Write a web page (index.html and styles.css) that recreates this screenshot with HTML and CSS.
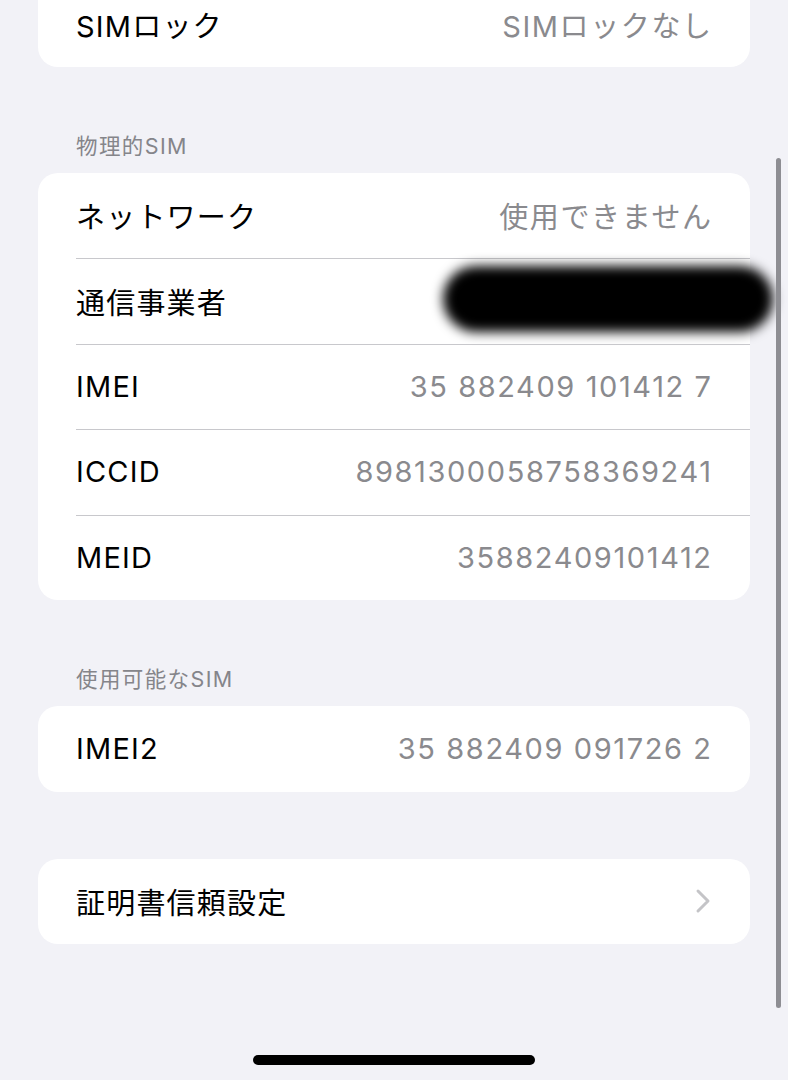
FILE: index.html
```html
<!DOCTYPE html>
<html lang="ja">
<head>
<meta charset="utf-8">
<link rel="stylesheet" href="styles.css">
</head>
<body>
<div class="screen">
  <div class="card first">
    <div class="row"><span class="label">SIMロック</span><span class="value">SIMロックなし</span></div>
  </div>

  <div class="header">物理的SIM</div>
  <div class="card">
    <div class="row"><span class="label">ネットワーク</span><span class="value">使用できません</span></div>
    <div class="row carrier"><span class="label">通信事業者</span><span class="value"></span><div class="redact"></div></div>
    <div class="row"><span class="label">IMEI</span><span class="value">35 882409 101412 7</span></div>
    <div class="row"><span class="label">ICCID</span><span class="value">8981300058758369241</span></div>
    <div class="row"><span class="label">MEID</span><span class="value">35882409101412</span></div>
  </div>

  <div class="header">使用可能なSIM</div>
  <div class="card">
    <div class="row"><span class="label">IMEI2</span><span class="value">35 882409 091726 2</span></div>
  </div>

  <div class="card spaced">
    <div class="row"><span class="label">証明書信頼設定</span>
      <svg class="chev" width="16" height="26" viewBox="0 0 16 26"><path d="M3 3 L13 13 L3 23" fill="none" stroke="#c4c4c7" stroke-width="3" stroke-linecap="round" stroke-linejoin="round"/></svg>
    </div>
  </div>

  <div class="scrollbar"></div>
  <div class="home"></div>
</div>
</body>
</html>
```
FILE: styles.css
```css
html, body {
  margin: 0;
  padding: 0;
  background: #f2f2f7;
}
body {
  font-family: "Inter", "Noto Sans CJK JP", sans-serif;
  -webkit-font-smoothing: antialiased;
}
.screen {
  position: relative;
  width: 788px;
  height: 1080px;
  overflow: hidden;
  padding: 0 38px;
  box-sizing: border-box;
}
.card {
  background: #fff;
  border-radius: 20px;
  overflow: visible;
}
.card.first {
  margin-top: -19px;
}
.card.spaced {
  margin-top: 67px;
}
.row {
  position: relative;
  display: flex;
  align-items: center;
  justify-content: space-between;
  height: 85.5px;
  padding: 0 39px 0 38px;
  box-sizing: border-box;
}
.row + .row::before {
  content: "";
  position: absolute;
  left: 38px;
  right: 0;
  top: 0;
  height: 1px;
  background: #c8c8cc;
}
.label {
  font-size: 29px;
  color: #000;
  letter-spacing: 1.2px;
}
.value {
  font-size: 29px;
  color: #8a8a8e;
  letter-spacing: 1.6px;
  margin-right: -1.6px;
}
.header {
  font-size: 21.5px;
  color: #85858a;
  letter-spacing: 1.4px;
  padding: 65px 0 0 38px;
  height: 41px;
  line-height: 28px;
}
.redact {
  position: absolute;
  left: 405px;
  top: 8px;
  width: 330px;
  height: 66px;
  background: #000;
  border-radius: 34px;
  filter: blur(6px);
}
.chev {
  margin-right: 0;
}
.scrollbar {
  position: absolute;
  left: 776px;
  top: 158px;
  width: 5px;
  height: 850px;
  border-radius: 3px;
  background: #8e8e93;
}
.home {
  position: absolute;
  left: 253px;
  top: 1055px;
  width: 282px;
  height: 10px;
  border-radius: 5px;
  background: #000;
}
```
